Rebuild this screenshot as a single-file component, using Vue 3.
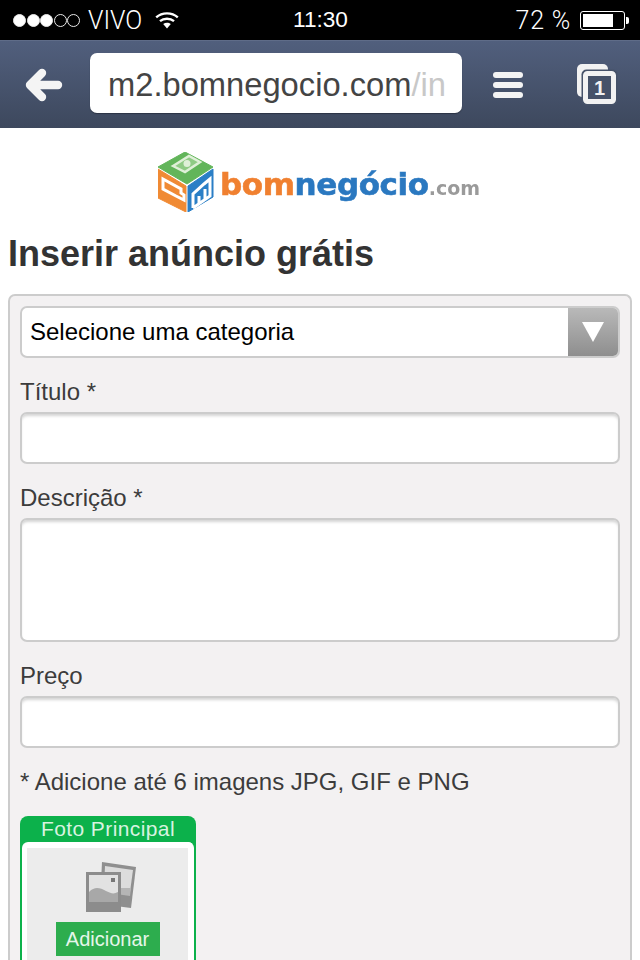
<script setup>
const fields = [
  { label: 'Título *', kind: 'line' },
  { label: 'Descrição *', kind: 'area' },
  { label: 'Preço', kind: 'line' },
]
</script>

<template>
  <div class="screen">
    <header class="status">
      <div class="status-left">
        <span class="dots">
          <i class="dot on"></i><i class="dot on"></i><i class="dot on"></i><i class="dot"></i><i class="dot"></i>
        </span>
        <span class="carrier">VIVO</span>
        <svg class="wifi" width="24" height="18" viewBox="0 0 24 18">
          <path d="M1.2 6.400C7.200 1 16.800 1 22.800 6.400" fill="none" stroke="#fff" stroke-width="2.400" />
          <path d="M5 10.200C8.800 7 15.200 7 19 10.200" fill="none" stroke="#fff" stroke-width="2.400" />
          <path d="M8.200 13 12 17.400 15.800 13C13.600 11.200 10.400 11.200 8.200 13Z" fill="#fff" />
        </svg>
      </div>
      <span class="time">11:30</span>
      <div class="status-right">
        <span class="pct">72 %</span>
        <span class="battery"><span class="charge"></span></span>
        <span class="nub"></span>
      </div>
    </header>

    <nav class="toolbar">
      <svg class="back" width="38" height="34" viewBox="0 0 38 34">
        <path d="M17 5 5 17 17 29M6 17H33" fill="none" stroke="#f4f4f4" stroke-width="8.400" stroke-linecap="round" stroke-linejoin="round" />
      </svg>
      <div class="url"><span class="host">m2.bomnegocio.com</span><span class="path">/in</span></div>
      <span class="menu"><i></i><i></i><i></i></span>
      <svg class="tabs" width="42" height="42" viewBox="0 0 42 42">
        <rect x="1" y="0" width="31" height="33" rx="5" fill="#f2f2f2" />
        <rect x="5.500" y="5.500" width="36" height="36" rx="5" fill="#465269" />
        <rect x="9.500" y="9.500" width="28" height="28" rx="2" fill="#465269" stroke="#f2f2f2" stroke-width="5" />
        <text x="23.500" y="31" text-anchor="middle" class="tab-num">1</text>
      </svg>
    </nav>

    <main class="page">
      <div class="logo">
        <svg class="cube" width="56" height="60" viewBox="0 0 56 60">
          <path d="M27 0 55 15 29 32 0 15Z" fill="#62b55a" stroke="#62b55a" stroke-linejoin="round" />
          <path d="M0 17 28 34V60L0 46Z" fill="#f08a34" stroke="#f08a34" stroke-linejoin="round" />
          <path d="M30 34 55 17V45L30 60Z" fill="#2a7fc6" stroke="#2a7fc6" stroke-linejoin="round" />
          <path d="M15 14 31 4 42 10 27 20Z" fill="#8fcb85" stroke="#dff0d8" stroke-width="2.500" />
          <circle cx="29" cy="11.500" r="3.500" fill="#dff0d8" />
          <path d="M5 27 23 37V41L26 43V48L18 44 5 37Z" fill="none" stroke="#fff" stroke-width="3" />
          <path d="M35 56V42L46 32 52 27V44L35 56M41 44V52M47 37V47" fill="none" stroke="#fff" stroke-width="3" />
        </svg>
        <span class="wordmark"><span class="orange">bom</span><span class="blue">negócio</span><span class="grey">.com</span></span>
      </div>

      <h1>Inserir anúncio grátis</h1>

      <form class="panel">
        <div class="select">
          <span class="select-text">Selecione uma categoria</span>
          <span class="select-btn"><i class="tri"></i></span>
        </div>

        <div v-for="f in fields" :key="f.label" class="field">
          <label>{{ f.label }}</label>
          <div class="input" :class="f.kind"></div>
        </div>

        <p class="note">* Adicione até 6 imagens JPG, GIF e PNG</p>

        <div class="photo">
          <div class="photo-title">Foto Principal</div>
          <div class="photo-body">
            <svg class="pic" width="50" height="50" viewBox="0 0 50 50">
              <path d="M16 0 50 5 45 46 14 42Z" fill="#8f8f8f" />
              <path d="M19 4 47 8 44 30 18 26Z" fill="#dcdcdc" />
              <path d="M30 26 45 26 44 34 30 32Z" fill="#b5b5b5" />
              <rect x="0" y="10" width="35" height="40" fill="#8c8c8c" />
              <rect x="3" y="13" width="29" height="27" fill="#e2e2e2" />
              <path d="M3 30C9 24 14 26 20 29S28 32 32 30V40H3Z" fill="#a8a8a8" />
              <rect x="25" y="16" width="4" height="4" fill="#777" />
            </svg>
            <span class="add">Adicionar</span>
          </div>
        </div>
      </form>
    </main>
  </div>
</template>

<style scoped>
.screen {
  width: 640px;
  height: 960px;
  overflow: hidden;
  background: #fff;
  font-family: "Liberation Sans", Arial, sans-serif;
  display: flex;
  flex-direction: column;
}

.status {
  height: 40px;
  flex: none;
  background: #000;
  color: #fff;
  display: grid;
  grid-template-columns: 1fr auto 1fr;
  align-items: center;
  font-size: 24px;
  padding: 0 11px 0 13px;
  box-sizing: border-box;
}
.status-left { display: flex; align-items: center; }
.dots { display: flex; gap: 0.5px; margin-right: 8px; }
.dot {
  width: 13px;
  height: 13px;
  border-radius: 50%;
  border: 1px solid #e8e8e8;
  box-sizing: border-box;
}
.dot.on { background: #fff; }
.carrier, .pct { font-family: Roboto, "Liberation Sans", sans-serif; font-weight: 300; }
.carrier { font-size: 25px; }
.wifi { margin-left: 13px; }
.time { font-size: 22.6px; padding-right: 1px; }
.status-right { display: flex; align-items: center; justify-content: flex-end; }
.pct { margin-right: 9px; font-size: 25px; letter-spacing: 0.8px; }
.battery {
  width: 45px;
  height: 19px;
  border: 1px solid #fff;
  border-radius: 3px;
  box-sizing: border-box;
  padding: 2px;
  display: block;
}
.charge { display: block; width: 30px; height: 100%; background: #fff; }
.nub { width: 3px; height: 7px; background: #fff; border-radius: 0 2px 2px 0; margin-left: 1px; }

.toolbar {
  height: 88px;
  flex: none;
  box-sizing: border-box;
  background: linear-gradient(#515f7d, #3d485d);
  border-top: 1px solid #5f6c88;
  display: flex;
  align-items: center;
  padding-left: 25px;
}
.url {
  width: 372px;
  height: 60px;
  margin: 0 0 3px 27px;
  box-sizing: border-box;
  background: #fff;
  border-radius: 7px;
  box-shadow: 0 1px 1px #2c3445;
  padding-left: 18px;
  line-height: 64px;
  font-size: 32.7px;
  white-space: nowrap;
  overflow: hidden;
}
.host { color: #444; }
.path { color: #c8c8c8; }
.menu {
  display: flex;
  flex-direction: column;
  gap: 4px;
  width: 30px;
  margin-left: 31px;
}
.menu i { height: 6px; background: #f4f4f4; border-radius: 3px; }
.tabs { margin-left: 53px; margin-top: 1px; }
.tab-num { font: bold 20px "Liberation Sans", Arial, sans-serif; fill: #f2f2f2; }

.page { flex: 1; min-height: 0; display: flex; flex-direction: column; }

.logo {
  height: 100px;
  flex: none;
  box-sizing: border-box;
  display: flex;
  align-items: center;
  padding: 8px 0 0 158px;
  gap: 6px;
  filter: blur(0.6px);
}
.wordmark {
  font: bold 31px "DejaVu Sans", "Liberation Sans", sans-serif;
  letter-spacing: -0.4px;
  padding-top: 4px;
  -webkit-text-stroke: 0.6px currentColor;
}
.orange { color: #f08030; }
.blue { color: #2a78c0; }
.grey { color: #9a9a9a; font-size: 19px; letter-spacing: 0; -webkit-text-stroke: 0; }

h1 {
  margin: 0 0 0 8px;
  height: 66px;
  flex: none;
  font-size: 36px;
  line-height: 52px;
  font-weight: bold;
  color: #333;
}

.panel {
  margin: 0 8px;
  flex: none;
  height: 700px;
  box-sizing: border-box;
  background: #f3f1f2;
  border: 2px solid #ccc;
  border-bottom: 0;
  border-radius: 7px 7px 0 0;
  padding: 10px 10px 0;
}

.select {
  height: 52px;
  box-sizing: border-box;
  background: #fff;
  border: 2px solid #ccc;
  border-radius: 7px;
  display: flex;
  align-items: center;
  overflow: hidden;
  padding-left: 8px;
}
.select-text { flex: 1; font-size: 24px; color: #000; }
.select-btn {
  width: 50px;
  align-self: stretch;
  background: linear-gradient(#b9b9b9, #8e8e8e);
  display: flex;
  align-items: center;
  justify-content: center;
}
.tri {
  width: 0;
  height: 0;
  border-left: 11px solid transparent;
  border-right: 11px solid transparent;
  border-top: 20px solid #fff;
}

.field { margin-top: 20px; }
.field label {
  display: block;
  height: 34px;
  font-size: 24px;
  line-height: 28px;
  color: #3c3c3c;
}
.input {
  box-sizing: border-box;
  background: #fff;
  border: 2px solid #ccc;
  border-radius: 7px;
  box-shadow: inset 0 3px 3px -1px #d4d4d4;
}
.input.line { height: 52px; }
.input.area { height: 124px; }

.note {
  margin: 20px 0 0;
  font-size: 24px;
  line-height: 28px;
  color: #3c3c3c;
}

.photo {
  margin-top: 20px;
  width: 176px;
  height: 200px;
  background: #0cb14b;
  border-radius: 8px 8px 0 0;
  padding: 0 2px;
  box-sizing: border-box;
}
.photo-title {
  height: 26px;
  line-height: 26px;
  text-align: center;
  font-size: 21px;
  letter-spacing: 0.4px;
  color: #d8f3e0;
}
.photo-body {
  height: 174px;
  box-sizing: border-box;
  border-style: solid;
  border-color: #fff;
  border-width: 6px 6px 0 5px;
  border-radius: 6px 6px 0 0;
  background: #ececec;
  display: flex;
  flex-direction: column;
  align-items: center;
  padding-top: 14px;
  gap: 10px;
}
.pic { margin-left: 7px; filter: blur(0.5px); }
.add {
  width: 104px;
  height: 34px;
  line-height: 34px;
  text-align: center;
  background: #2dad4e;
  color: #e6f6ea;
  font-size: 20px;
}
</style>
